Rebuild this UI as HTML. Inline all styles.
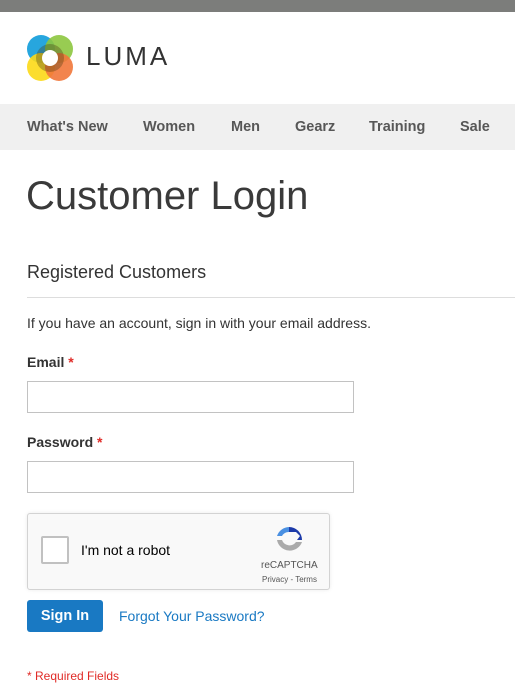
<!DOCTYPE html>
<html><head><style>
body{margin:0;width:515px;height:690px;overflow:hidden;font-family:"Liberation Sans",sans-serif;color:#333;background:#fff;position:relative}
.top{height:12px;background:#7c7d7b}
.hdr{height:92px;position:relative}
.logo{position:absolute;left:26px;top:22px}
.luma{position:absolute;left:86px;top:29px;font-size:26px;letter-spacing:3px;color:#333;font-weight:normal}
.nav{height:46px;background:#f0f0f0;position:relative;font-weight:bold;font-size:14.5px;color:#575757}
.nav span{position:absolute;top:15px}
h1{position:absolute;left:26px;top:174px;margin:0;font-weight:300;font-size:40px;color:#3a3a3a}
.h2{position:absolute;left:27px;top:262px;font-size:18px}
.hr{position:absolute;left:27px;right:0;top:297px;border-top:1px solid #ddd}
.t{position:absolute;font-size:14px}
.in{position:absolute;left:27px;width:325px;height:30px;border:1px solid #c2c2c2;background:#fff}
.req{color:#e02b27}
.cap{position:absolute;left:27px;top:513px;width:301px;height:75px;border:1px solid #d3d3d3;border-radius:3px;background:#f9f9f9;box-shadow:0 0 4px rgba(0,0,0,.08)}
.cb{position:absolute;left:13px;top:22px;width:24px;height:24px;border:2px solid #c1c1c1;border-radius:2px;background:#fff}
.btn{position:absolute;left:27px;top:600px;width:76px;height:32px;background:#1979c3;border-radius:3px;color:#fff;font-weight:bold;font-size:14.5px;text-align:center;line-height:32px}
</style></head><body>
<div class="top"></div>
<div class="hdr">
<svg class="logo" width="48" height="48" viewBox="0 0 48 48">
<circle cx="15" cy="15" r="14" fill="#27a6de"/>
<circle cx="33" cy="15" r="14" fill="#8dc63f" opacity=".9"/>
<circle cx="15" cy="33" r="14" fill="#fcd917" opacity=".9"/>
<circle cx="33" cy="33" r="14" fill="#f1773a" opacity=".9"/>
<circle cx="24" cy="24" r="14" fill="#4a3a10" opacity=".35"/>
<circle cx="24" cy="24" r="8" fill="#fff"/>
</svg>
<div class="luma">LUMA</div>
</div>
<div class="nav">
<span style="left:27px">What's New</span><span style="left:143px">Women</span><span style="left:231px">Men</span><span style="left:295px">Gearz</span><span style="left:369px">Training</span><span style="left:460px">Sale</span>
</div>
<h1>Customer Login</h1>
<div class="h2">Registered Customers</div>
<div class="hr"></div>
<div class="t" style="left:27px;top:315px">If you have an account, sign in with your email address.</div>
<div class="t" style="left:27px;top:354px;font-weight:bold">Email <span class="req">*</span></div>
<div class="in" style="top:381px"></div>
<div class="t" style="left:27px;top:434px;font-weight:bold">Password <span class="req">*</span></div>
<div class="in" style="top:461px"></div>
<div class="cap"><div class="cb"></div>
<div style="position:absolute;left:53px;top:28px;font-size:14px;color:#000">I'm not a robot</div>
<svg style="position:absolute;left:245px;top:10px" width="32" height="32" viewBox="0 0 32 32">
<path d="M16 3A13 13 0 0 0 4 12l5 0A8 8 0 0 1 16 8z" fill="#4a90e2"/>
<path d="M16 3A13 13 0 0 1 29 16h-5l3-4-4-4L16 8z" fill="#1c3aa9"/>
<path d="M4 16A13 13 0 0 0 29 18h-6A8 8 0 0 1 9 16z" fill="#aaa"/>
</svg>
<div style="position:absolute;left:233px;top:46px;font-size:10px;color:#555">reCAPTCHA</div>
<div style="position:absolute;left:234px;top:61px;font-size:8px;color:#555">Privacy - Terms</div>
</div>
<div class="btn">Sign In</div>
<div class="t" style="left:119px;top:608px;color:#1979c3">Forgot Your Password?</div>
<div class="t" style="left:27px;top:669px;font-size:12px;color:#e02b27">* Required Fields</div>
</body></html>
